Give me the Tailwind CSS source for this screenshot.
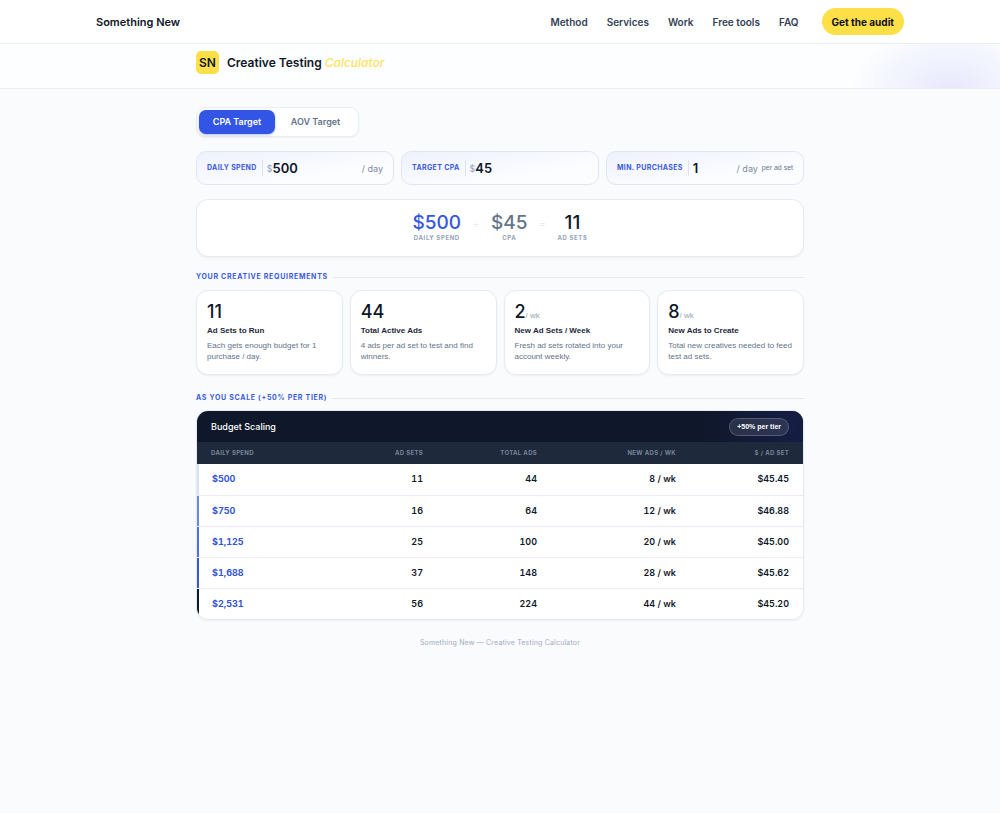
<!DOCTYPE html>
<html lang="en">
<head>
<meta charset="utf-8">
<meta name="viewport" content="width=device-width, initial-scale=1">
<title>Creative Testing Calculator</title>
<script src="https://cdn.jsdelivr.net/npm/@tailwindcss/browser@4"></script>
</head>
<body class="min-h-screen bg-[#fafbfd] font-['Inter',sans-serif] text-[#0f172a]">
<header class="border-b border-[#e8eef4] bg-white">
  <div class="mx-auto flex h-[43px] max-w-[808px] items-center justify-between">
    <a href="#" class="text-[11px] leading-4 font-semibold">Something New</a>
    <nav class="flex items-center gap-[19px] text-[10px] leading-4 font-semibold text-[#334155]">
      <a href="#">Method</a>
      <a href="#">Services</a>
      <a href="#">Work</a>
      <a href="#">Free tools</a>
      <a href="#">FAQ</a>
      <a href="#" class="ml-1 flex h-[27px] items-center rounded-full bg-[#fde047] px-[10px] font-bold text-[#0b1020]">Get the audit</a>
    </nav>
  </div>
</header>
<div class="border-b border-[#eaeef5] bg-[#fdfeff] bg-[radial-gradient(ellipse_100px_70px_at_95%_110%,#e6e8fc,#f3f5fe_60%,transparent)]">
  <div class="mx-auto flex h-[44px] max-w-[608px] items-center gap-2 pb-[7px]">
    <span class="flex size-[23px] items-center justify-center rounded-[5px] bg-[#fde047] text-[12px] leading-4 font-semibold">SN</span>
    <h1 class="text-[12px] leading-4 font-semibold">Creative Testing <em class="font-medium text-[#fde25f]">Calculator</em></h1>
  </div>
</div>
<main class="mx-auto max-w-[608px] pt-[18px]">
  <div class="flex h-[30px] w-fit items-center rounded-[9px] border border-[#e9edf4] bg-white px-0.5 text-[9px] leading-3 font-semibold shadow-xs">
    <button type="button" class="h-6 w-[76px] rounded-[7px] bg-[#3355e6] text-white shadow-sm shadow-[#3355e6]/30">CPA Target</button>
    <button type="button" class="h-6 w-[81px] text-[#64748b]">AOV Target</button>
  </div>

  <form class="mt-[14px] grid grid-cols-3 gap-[7px]">
    <div class="flex h-[34px] items-center rounded-[10px] border border-[#dfe6f3] bg-linear-to-br from-[#eef2fe] to-[#fcfdff] to-70% px-[10px]">
      <label for="spend" class="border-r border-[#dde3ef] py-0.5 pr-[5px] text-[7px] leading-3 font-bold tracking-wider whitespace-nowrap text-[#3b5bdb]">DAILY SPEND</label>
      <span class="pt-0.5 pl-1 text-[9px] leading-4 text-[#94a3b8]">$</span>
      <input id="spend" type="text" value="500" class="w-0 min-w-0 flex-1 bg-transparent text-[13px] leading-4 font-semibold outline-none">
      <span class="pt-0.5 text-[9px] leading-4 text-[#7c8ba1]">/ day</span>
    </div>
    <div class="flex h-[34px] items-center rounded-[10px] border border-[#dfe6f3] bg-linear-to-br from-[#eef2fe] to-[#fcfdff] to-70% px-[10px]">
      <label for="cpa" class="border-r border-[#dde3ef] py-0.5 pr-[5px] text-[7px] leading-3 font-bold tracking-wider whitespace-nowrap text-[#3b5bdb]">TARGET CPA</label>
      <span class="pt-0.5 pl-1 text-[9px] leading-4 text-[#94a3b8]">$</span>
      <input id="cpa" type="text" value="45" class="w-0 min-w-0 flex-1 bg-transparent text-[13px] leading-4 font-semibold outline-none">
    </div>
    <div class="flex h-[34px] items-center rounded-[10px] border border-[#dfe6f3] bg-linear-to-br from-[#eef2fe] to-[#fcfdff] to-70% px-[10px]">
      <label for="min" class="border-r border-[#dde3ef] py-0.5 pr-[5px] text-[7px] leading-3 font-bold tracking-wider whitespace-nowrap text-[#3b5bdb]">MIN. PURCHASES</label>
      <input id="min" type="text" value="1" class="w-0 min-w-0 flex-1 bg-transparent pl-1 text-[13px] leading-4 font-semibold outline-none">
      <span class="pt-0.5 text-[9px] leading-4 text-[#7c8ba1]">/ day</span>
      <span class="pl-1 font-['Liberation_Sans',sans-serif] text-[7px] leading-4 text-[#64748b]">per ad set</span>
    </div>
  </form>

  <section class="mt-[14px] flex h-[58px] items-center justify-center gap-3 rounded-[12px] border border-[#e6eaf1] bg-white text-center shadow-xs">
    <div>
      <p class="text-[19px] leading-5 font-medium text-[#3457dd]">$500</p>
      <p class="text-[6px] leading-[10px] font-bold tracking-widest text-[#94a3b8]">DAILY SPEND</p>
    </div>
    <span class="pb-2 text-[9px] leading-4 text-[#dde3ec]">÷</span>
    <div>
      <p class="text-[19px] leading-5 font-medium text-[#64748b]">$45</p>
      <p class="text-[6px] leading-[10px] font-bold tracking-widest text-[#94a3b8]">CPA</p>
    </div>
    <span class="pb-2 text-[9px] leading-4 text-[#dde3ec]">=</span>
    <div>
      <p class="text-[19px] leading-5 font-medium">11</p>
      <p class="text-[6px] leading-[10px] font-bold tracking-widest text-[#94a3b8]">AD SETS</p>
    </div>
  </section>

  <h2 class="mt-[14px] flex items-center gap-[5px] text-[7px] leading-3 font-bold tracking-widest text-[#3b5bdb] after:h-px after:flex-1 after:bg-[#e4e8ef]">YOUR CREATIVE REQUIREMENTS</h2>
  <section class="mt-[7px] grid grid-cols-4 gap-[7px]">
    <article class="min-h-[85px] rounded-[12px] border border-[#e6eaf1] bg-white px-[10px] pt-[11px] shadow-xs">
      <p class="text-[18px] leading-5 font-medium">11</p>
      <h3 class="mt-[3px] font-['Liberation_Sans',sans-serif] text-[8px] leading-3 font-bold text-[#1e293b]">Ad Sets to Run</h3>
      <p class="mt-[3px] font-['Liberation_Sans',sans-serif] text-[8px] leading-[11px] text-[#64748b]">Each gets enough budget for 1<br>purchase / day.</p>
    </article>
    <article class="min-h-[85px] rounded-[12px] border border-[#e6eaf1] bg-white px-[10px] pt-[11px] shadow-xs">
      <p class="text-[18px] leading-5 font-medium">44</p>
      <h3 class="mt-[3px] font-['Liberation_Sans',sans-serif] text-[8px] leading-3 font-bold text-[#1e293b]">Total Active Ads</h3>
      <p class="mt-[3px] font-['Liberation_Sans',sans-serif] text-[8px] leading-[11px] text-[#64748b]">4 ads per ad set to test and find<br>winners.</p>
    </article>
    <article class="min-h-[85px] rounded-[12px] border border-[#e6eaf1] bg-white px-[10px] pt-[11px] shadow-xs">
      <p class="text-[18px] leading-5 font-medium">2<span class="font-['Liberation_Sans',sans-serif] text-[8px] leading-none font-normal text-[#94a3b8]">/ wk</span></p>
      <h3 class="mt-[3px] font-['Liberation_Sans',sans-serif] text-[8px] leading-3 font-bold text-[#1e293b]">New Ad Sets / Week</h3>
      <p class="mt-[3px] font-['Liberation_Sans',sans-serif] text-[8px] leading-[11px] text-[#64748b]">Fresh ad sets rotated into your<br>account weekly.</p>
    </article>
    <article class="min-h-[85px] rounded-[12px] border border-[#e6eaf1] bg-white px-[10px] pt-[11px] shadow-xs">
      <p class="text-[18px] leading-5 font-medium">8<span class="font-['Liberation_Sans',sans-serif] text-[8px] leading-none font-normal text-[#94a3b8]">/ wk</span></p>
      <h3 class="mt-[3px] font-['Liberation_Sans',sans-serif] text-[8px] leading-3 font-bold text-[#1e293b]">New Ads to Create</h3>
      <p class="mt-[3px] font-['Liberation_Sans',sans-serif] text-[8px] leading-[11px] text-[#64748b]">Total new creatives needed to feed<br>test ad sets.</p>
    </article>
  </section>

  <h2 class="mt-[17px] flex items-center gap-[5px] text-[7px] leading-3 font-bold tracking-widest text-[#3b5bdb] after:h-px after:flex-1 after:bg-[#e4e8ef]">AS YOU SCALE (+50% PER TIER)</h2>
  <section class="mt-[6px] overflow-hidden rounded-[12px] border border-[#e6eaf1] bg-white shadow-xs">
    <div class="flex h-[31px] items-center justify-between bg-[#0f172a] bg-[radial-gradient(circle_at_98%_50%,#151e44,transparent_90px)] px-[14px]">
      <h3 class="text-[9px] leading-3 font-medium text-white">Budget Scaling</h3>
      <span class="flex h-[18px] items-center rounded-full border border-white/20 bg-white/10 px-[7px] font-['Liberation_Sans',sans-serif] text-[7px] leading-3 font-bold text-white">+50% per tier</span>
    </div>
    <table class="w-full table-fixed text-right text-[9px] leading-3 font-semibold tabular-nums">
      <thead>
        <tr class="h-[22px] bg-[#1e293b] text-[6px] tracking-wider text-[#76849a]">
          <th scope="col" class="pl-[14px] text-left font-bold">DAILY SPEND</th>
          <th scope="col" class="w-[90px] pr-[14px] font-bold">AD SETS</th>
          <th scope="col" class="w-[114px] pr-[14px] font-bold">TOTAL ADS</th>
          <th scope="col" class="w-[139px] pr-[14px] font-bold">NEW ADS / WK</th>
          <th scope="col" class="w-[113px] pr-[14px] font-bold">$ / AD SET</th>
        </tr>
      </thead>
      <tbody class="divide-y divide-[#e9edf3]">
        <tr class="h-[31px]"><td class="pl-[15px] text-left font-bold text-[#3455d6] shadow-[inset_2px_0_0_#d9e0fb]">$500</td><td class="pr-[14px]">11</td><td class="pr-[14px]">44</td><td class="pr-[14px]">8 / wk</td><td class="pr-[14px]">$45.45</td></tr>
        <tr class="h-[31px]"><td class="pl-[15px] text-left font-bold text-[#3455d6] shadow-[inset_2px_0_0_#6b86ee]">$750</td><td class="pr-[14px]">16</td><td class="pr-[14px]">64</td><td class="pr-[14px]">12 / wk</td><td class="pr-[14px]">$46.88</td></tr>
        <tr class="h-[31px]"><td class="pl-[15px] text-left font-bold text-[#3455d6] shadow-[inset_2px_0_0_#4f6dea]">$1,125</td><td class="pr-[14px]">25</td><td class="pr-[14px]">100</td><td class="pr-[14px]">20 / wk</td><td class="pr-[14px]">$45.00</td></tr>
        <tr class="h-[31px]"><td class="pl-[15px] text-left font-bold text-[#3455d6] shadow-[inset_2px_0_0_#3a58d4]">$1,688</td><td class="pr-[14px]">37</td><td class="pr-[14px]">148</td><td class="pr-[14px]">28 / wk</td><td class="pr-[14px]">$45.62</td></tr>
        <tr class="h-[31px]"><td class="pl-[15px] text-left font-bold text-[#3455d6] shadow-[inset_2px_0_0_#0f172a]">$2,531</td><td class="pr-[14px]">56</td><td class="pr-[14px]">224</td><td class="pr-[14px]">44 / wk</td><td class="pr-[14px]">$45.20</td></tr>
      </tbody>
    </table>
  </section>
  <footer class="py-[17px] text-center text-[7px] leading-3 tracking-wide text-[#a0acbd]">Something New — Creative Testing Calculator</footer>
</main>
</body>
</html>
